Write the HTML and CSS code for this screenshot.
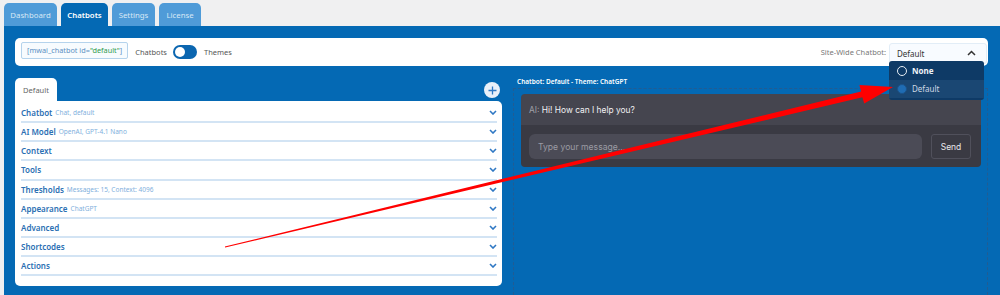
FILE: index.html
```html
<!DOCTYPE html>
<html>
<head>
<meta charset="utf-8">
<link rel="stylesheet" href="styles.css">
</head>
<body>
<div class="tabs">
  <div class="tab w-dash">Dashboard</div>
  <div class="tab active w-chat">Chatbots</div>
  <div class="tab w-set">Settings</div>
  <div class="tab w-lic">License</div>
</div>
<div class="main">
  <div class="topbar">
    <div class="shortcode">[mwai_chatbot id=<span class="q">"default"</span>]</div>
    <span class="lbl">Chatbots</span>
    <span class="toggle"><span class="knob"></span></span>
    <span class="lbl">Themes</span>
    <span class="spacer"></span>
    <span class="sitelbl">Site-Wide Chatbot:</span>
    <div class="select">
      <span>Default</span>
      <svg class="caret" width="9" height="6" viewBox="0 0 9 6"><path d="M1 5 L4.5 1.5 L8 5" fill="none" stroke="#333" stroke-width="1.5"/></svg>
      <div class="menu">
        <div class="opt"><span class="radio"></span><b>None</b></div>
        <div class="opt sel"><span class="radio on"></span>Default</div>
      </div>
    </div>
  </div>
  <div class="cols">
    <div class="left">
      <div class="lhead">
        <div class="ltab">Default</div>
        <div class="plus"><svg width="9" height="9" viewBox="0 0 9 9"><path d="M4.5 0.5 V8.5 M0.5 4.5 H8.5" stroke="#2f78c4" stroke-width="1.3"/></svg></div>
      </div>
      <div class="panel">
        <div class="row"><span class="t">Chatbot</span><span class="s">Chat, default</span><svg class="chev" width="8" height="5" viewBox="0 0 8 5"><path d="M1 1 L4 4 L7 1" fill="none" stroke="#2f78c4" stroke-width="1.6"/></svg></div>
        <div class="row"><span class="t">AI Model</span><span class="s">OpenAI, GPT-4.1 Nano</span><svg class="chev" width="8" height="5" viewBox="0 0 8 5"><path d="M1 1 L4 4 L7 1" fill="none" stroke="#2f78c4" stroke-width="1.6"/></svg></div>
        <div class="row"><span class="t">Context</span><svg class="chev" width="8" height="5" viewBox="0 0 8 5"><path d="M1 1 L4 4 L7 1" fill="none" stroke="#2f78c4" stroke-width="1.6"/></svg></div>
        <div class="row"><span class="t">Tools</span><svg class="chev" width="8" height="5" viewBox="0 0 8 5"><path d="M1 1 L4 4 L7 1" fill="none" stroke="#2f78c4" stroke-width="1.6"/></svg></div>
        <div class="row"><span class="t">Thresholds</span><span class="s">Messages: 15, Context: 4096</span><svg class="chev" width="8" height="5" viewBox="0 0 8 5"><path d="M1 1 L4 4 L7 1" fill="none" stroke="#2f78c4" stroke-width="1.6"/></svg></div>
        <div class="row"><span class="t">Appearance</span><span class="s">ChatGPT</span><svg class="chev" width="8" height="5" viewBox="0 0 8 5"><path d="M1 1 L4 4 L7 1" fill="none" stroke="#2f78c4" stroke-width="1.6"/></svg></div>
        <div class="row"><span class="t">Advanced</span><svg class="chev" width="8" height="5" viewBox="0 0 8 5"><path d="M1 1 L4 4 L7 1" fill="none" stroke="#2f78c4" stroke-width="1.6"/></svg></div>
        <div class="row"><span class="t">Shortcodes</span><svg class="chev" width="8" height="5" viewBox="0 0 8 5"><path d="M1 1 L4 4 L7 1" fill="none" stroke="#2f78c4" stroke-width="1.6"/></svg></div>
        <div class="row"><span class="t">Actions</span><svg class="chev" width="8" height="5" viewBox="0 0 8 5"><path d="M1 1 L4 4 L7 1" fill="none" stroke="#2f78c4" stroke-width="1.6"/></svg></div>
      </div>
    </div>
    <div class="right">
      <div class="rtitle">Chatbot: Default - Theme: ChatGPT</div>
      <div class="dash">
        <div class="chat">
          <div class="chat-msgs"><span class="ai">AI:</span> Hi! How can I help you?</div>
          <div class="chat-input">
            <div class="inp">Type your message...</div>
            <div class="send">Send</div>
          </div>
        </div>
      </div>
    </div>
  </div>
</div>
<svg class="arrow" width="1000" height="295" viewBox="0 0 1000 295">
  <polygon points="224.9,246.5 861.1,91.6 859.4,85.0 893,87 864.2,103.6 862.4,97.2 225.1,247.5" fill="#f00"/>
</svg>
</body>
</html>
```

FILE: styles.css
```css
html, body {
  margin: 0;
  padding: 0;
  width: 1000px;
  height: 295px;
  overflow: hidden;
}
body {
  background: #f0f0f1;
  font-family: "Noto Sans", "Open Sans", sans-serif;
  position: relative;
}
.tabs {
  display: flex;
  gap: 4px;
  padding: 3px 0 0 4px;
  height: 23px;
}
.tab {
  height: 23px;
  display: flex;
  align-items: center;
  justify-content: center;
  background: #4f9bd8;
  color: #d7e8f6;
  font-size: 7.8px;
  border-radius: 5px 5px 0 0;
}
.w-dash { width: 53px; }
.w-chat { width: 47px; }
.w-set { width: 43px; }
.w-lic { width: 42px; }
.tab.active {
  background: #0469b4;
  color: #fff;
  font-weight: 600;
}
.main {
  margin-left: 4px;
  background: #0469b4;
  padding: 12px 12px 0 11px;
  height: 257px;
  overflow: hidden;
}
.topbar {
  background: #fff;
  border-radius: 5px;
  height: 28px;
  display: flex;
  align-items: center;
  padding: 0 6px;
  font-size: 7.5px;
}
.shortcode {
  border: 1px solid #b5d3ec;
  background: #f7fbfe;
  border-radius: 2px;
  height: 15px;
  line-height: 15px;
  padding: 0 5px;
  color: #5b8fc2;
  font-size: 7.3px;
  margin-top: -3px;
}
.shortcode .q { color: #2f9a4c; }
.lbl { color: #555; margin-left: 7px; }
.toggle {
  margin-left: 6px;
  width: 24px;
  height: 14px;
  border-radius: 7px;
  background: #0b66b0;
  display: flex;
  align-items: center;
  padding-left: 2px;
  box-sizing: border-box;
}
.knob {
  width: 10px;
  height: 10px;
  border-radius: 50%;
  background: #fff;
}
.spacer { flex: 1; }
.sitelbl { color: #777; margin-right: 3px; }
.select {
  position: relative;
  width: 98px;
  height: 21px;
  box-sizing: border-box;
  border: 1px solid #e2edf7;
  border-radius: 3px;
  background: #f8fbff;
  display: flex;
  align-items: center;
  justify-content: space-between;
  padding: 0 10px 0 7px;
  color: #333;
  font-size: 8px;
  margin-right: -5px;
  margin-top: 2px;
}
.menu {
  position: absolute;
  left: -1px;
  top: 17px;
  width: 95px;
  background: #0e3a66;
  border-radius: 3px;
  padding: 1px 0 2px;
  z-index: 2;
}
.opt {
  height: 18px;
  display: flex;
  align-items: center;
  padding-left: 8px;
  color: #cfd9e4;
  font-size: 8px;
  gap: 5px;
}
.opt b { color: #eef3f8; font-weight: 700; }
.opt.sel { background: #1a4773; }
.radio {
  width: 8px;
  height: 8px;
  border: 1.5px solid #e6edf4;
  border-radius: 50%;
}
.radio.on {
  border-color: #1b5288;
  background: #1f6cb3;
}
.cols {
  display: flex;
  gap: 11px;
  margin-top: 12px;
}
.left { width: 487px; }
.lhead {
  display: flex;
  justify-content: space-between;
  align-items: flex-start;
  height: 23px;
}
.ltab {
  background: #fff;
  width: 42px;
  height: 23px;
  border-radius: 5px 5px 0 0;
  display: flex;
  align-items: center;
  justify-content: center;
  color: #666;
  font-size: 7.5px;
}
.plus {
  width: 16px;
  height: 16px;
  border-radius: 50%;
  background: #e9f0f9;
  display: flex;
  align-items: center;
  justify-content: center;
  margin: 4px 2px 0 0;
}
.panel {
  background: #fff;
  border-radius: 0 5px 5px 5px;
  padding: 3px 5px 10px 6px;
}
.row {
  height: 17.125px;
  border-bottom: 2px solid #d3e4f4;
  display: flex;
  align-items: center;
  position: relative;
}
.row .t {
  color: #2b6fb3;
  font-size: 8px;
  font-weight: 600;
}
.row .s {
  color: #7fb0dd;
  font-size: 6.5px;
  margin-left: 3px;
}
.chev { margin-left: auto; margin-right: 0; }
.right { width: 475px; }
.rtitle {
  color: #fff;
  font-size: 6.5px;
  font-weight: 600;
  height: 10px;
  line-height: 7px;
  padding-left: 4px;
}
.dash {
  border: 1px dashed #225c92;
  height: 215px;
  padding: 5px 6px 0 7px;
}
.chat {
  border-radius: 4px;
  overflow: hidden;
  font-family: Inter, "Noto Sans", sans-serif;
}
.chat-msgs {
  background: #45454f;
  height: 31px;
  display: flex;
  align-items: center;
  padding-left: 8px;
  color: #f2f2f4;
  font-size: 8.4px;
  white-space: pre;
}
.chat-msgs .ai { color: #a0a0a8; }
.chat-input {
  background: #3a3a43;
  display: flex;
  gap: 9px;
  padding: 9px 10px 8px 8px;
}
.inp {
  flex: 1;
  height: 25px;
  border-radius: 6px;
  background: #4b4b56;
  display: flex;
  align-items: center;
  padding-left: 9px;
  color: #9b9ba4;
  font-size: 8.6px;
}
.send {
  width: 40px;
  height: 25px;
  box-sizing: border-box;
  border: 1px solid #50505b;
  border-radius: 3px;
  display: flex;
  align-items: center;
  justify-content: center;
  color: #e8e8ea;
  font-size: 8.5px;
}
.arrow {
  position: absolute;
  left: 0;
  top: 0;
  pointer-events: none;
  z-index: 5;
}
```
